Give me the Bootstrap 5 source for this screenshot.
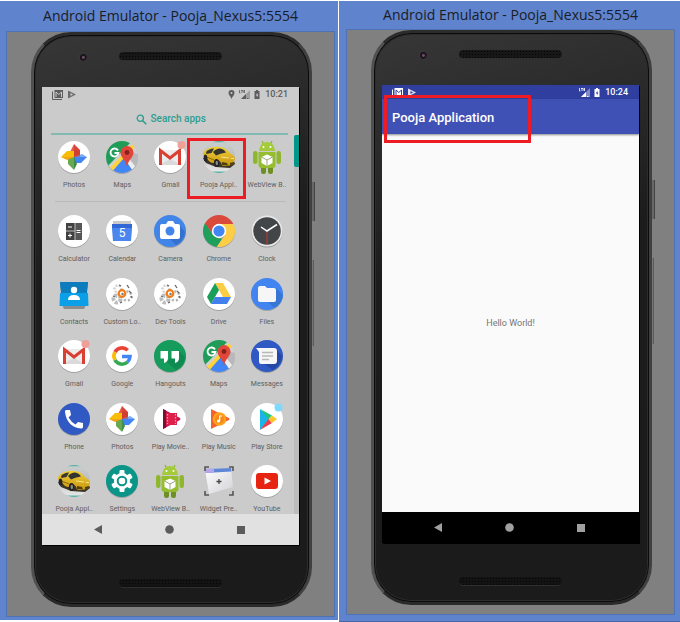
<!DOCTYPE html>
<html lang="en">
<head>
<meta charset="utf-8">
<meta name="viewport" content="width=device-width, initial-scale=1">
<title>Android Emulator - Pooja_Nexus5:5554</title>
<link href="https://cdn.jsdelivr.net/npm/bootstrap@5.3.0/dist/css/bootstrap.min.css" rel="stylesheet">
<style>
  body { font-family: Roboto, "Liberation Sans", sans-serif; background: #fff; }
  .desk { column-gap: 1px; padding-top: 1px; }
  .emu { background: #6083cd; min-width: 0; }
  .emu-a { flex: 1 1 338px; padding: 0 3px 3px 6px; margin-bottom: 2px; }
  .emu-b { flex: 1 1 341px; padding: 0 5px 6px 7px; border-bottom: 1px solid #4767a8; }
  .emu-title { font: 14px/26px "Open Sans", "Noto Sans", sans-serif; color: #191d25; margin: 0; padding: 1px 0; white-space: nowrap; text-align: center; }
  .emu-a .emu-title { padding: 2px 0; }
  .stage { background: #808080; border: 1px solid #4f72b5; padding: 0 22px 9px 24px; }

  .phone {
    position: relative; padding: 0 10px 0 8px;
    border: 3px solid #404040; border-top-color: #2c2c2c; border-bottom-color: #2a2a2a; border-left-color: #505050; border-radius: 40px;
    background: linear-gradient(165deg, #373737 0, #2d2d2e 15%, #1c1c1c 40%, #1b1b1b 100%);
    box-shadow: inset 0 0 0 1px #0b0b0b, inset 0 0 0 2px #2c2c2c;
  }
  .key { position: absolute; right: -6px; width: 3px; background: #696667; border-right: 1px solid #444; }
  .key-power { top: 147px; height: 39px; }
  .key-volume { top: 225px; height: 86px; right: -5px; width: 2px; border-color: #5c5c5c; background: #767676; }
  .bezel { display: grid; grid-template-columns: 1fr 103px 1fr; }
  .bezel-top { height: 52px; padding-top: 17px; }
  .bezel-bottom { height: 59px; padding-top: 34px; }
  .speaker { height: 9px; border-radius: 5px; background-color: #171717; background-image: radial-gradient(#050505 1px, transparent 1px); background-size: 3px 3px; background-clip: padding-box; border-bottom: 1px solid #2f2f2f; grid-column: 2; }
  .bezel-bottom .speaker { background-color: #131313; }
  .lens { width: 9px; height: 9px; margin-left: 3px; border-radius: 50%; background: radial-gradient(circle at 60% 60%, #6b4a62 0 1px, #17151b 2px 3px, #393539 4px); justify-self: center; }

  .screen { position: relative; box-shadow: 1px 1px 0 #000; min-height: 0; }
  .drawer { background: #cbcbcb; color: #5c5c5c; }
  .status { height: 14px; padding: 0 11px 0 10px; font-size: 9px; line-height: 14px; font-weight: 500; }
  .status svg { flex: none; }
  .status .clock { margin-left: 5px; }
  .find { height: 34px; margin: 0 11px 0 9px; padding: 4px 0 0 3px; border-bottom: 2px solid #83b9b1; color: #2f9d8e; gap: 4px; }
  .find input { width: 56px; padding: 0; border: 0; outline: 0; background: none; font-size: 10px; line-height: 14px; font-weight: 500; color: inherit; }
  .find input::placeholder { color: #2f9d8e; opacity: 1; }
  .apps { padding: 6px 3px 0 8px; min-width: 0; }
  .app-grid { display: grid; grid-template-columns: repeat(5, minmax(0, 1fr)); row-gap: 13px; align-content: space-between; }
  .split { height: 1px; margin: 11px 5px 13px 5px; background: #b9b9b9; }
  .app { position: relative; color: #5e5e5e; text-decoration: none; display: flex; flex-direction: column; align-items: center; gap: 8px; font-size: 7px; line-height: 9px; white-space: nowrap; }
  .app svg { width: 34px; height: 34px; margin: -1px; overflow: visible; }
  .rail { width: 5px; background: #bdbdbd; }
  .thumb { height: 32px; background: #009688; border-radius: 2px 0 0 2px; }
  .outline-box { position: absolute; border: 3px solid #ed1c24; pointer-events: none; z-index: 2; }
  .outline-app { top: -3px; bottom: -9px; left: -8px; right: -3px; }
  .outline-bar { top: 10px; left: 2px; width: 147px; height: 48px; }

  .keys { height: 31px; background: #e1e1e1; color: #5c5c5c; padding: 0 22px 0 20px; }
  .keys button { flex: 1 1 0; border: 0; padding: 0; background: none; color: inherit; line-height: 1; display: flex; justify-content: center; }
  .keys-dark { background: #000; color: #a0a0a0; }
  .hello { background: #fafafa; color: #757575; font-size: 9px; padding-top: 2px; }
  .status-blue { background: #303f9f; color: #fff; }
  .toolbar { height: 35px; background: #3f51b5; color: #fff; padding: 3px 10px 0; box-shadow: 0 1px 2px rgba(0,0,0,.45); z-index: 1; }
  .toolbar h2 { font-size: 13px; line-height: 16px; font-weight: 500; margin: 0; }
</style>
<script src="https://cdn.jsdelivr.net/npm/bootstrap@5.3.0/dist/js/bootstrap.bundle.min.js"></script>
</head>
<body>

<svg width="0" height="0" class="position-absolute" aria-hidden="true">
  <defs>
    <linearGradient id="gray" x2="1" y2="1"><stop stop-color="#fff"/><stop offset="1" stop-color="#d2d2d8"/></linearGradient>
    <linearGradient id="gold" x2="0" y2="1"><stop stop-color="#f0cf3a"/><stop offset="1" stop-color="#c9970f"/></linearGradient>
    <linearGradient id="haze" x2="0" y2="1"><stop stop-color="#c9cfce"/><stop offset=".5" stop-color="#bcbdbe"/><stop offset=".75" stop-color="#d8d8d8"/><stop offset="1" stop-color="#e8e8e8"/></linearGradient>
    <clipPath id="disc"><circle cx="16" cy="16" r="16"/></clipPath>
    <g id="plate"><circle cx="16" cy="17" r="16" fill="#000" opacity=".2"/><circle cx="16" cy="16" r="16" fill="#fff"/></g>
    <symbol id="photos" viewBox="-1 -1 34 34"><use href="#plate"/>
      <path d="M16 3l6 6v7h-6z" fill="#db4437"/><path d="M16 3v13l-4-5z" fill="#e8594b"/>
      <path d="M29 16l-6 6h-7v-6z" fill="#4285f4"/><path d="M16 16h13l-5-3z" fill="#7baaf7"/>
      <path d="M16 29l-6-6v-7h6z" fill="#6aa84f"/><path d="M16 16v13l3-6z" fill="#3c8f44"/>
      <path d="M3 16l6-6h7v6z" fill="#fbbc05"/><path d="M16 16H3l6 3z" fill="#f4a317"/>
      <path d="M16 9l6 0v7h-6z" fill="#c53929" opacity=".5"/></symbol>
    <symbol id="maps" viewBox="-1 -1 34 34"><circle cx="16" cy="17" r="16" opacity=".2"/>
      <g clip-path="url(#disc)"><path d="M0 0h32v32H0z" fill="#d0d0d2"/><path d="M0 0h26L0 27z" fill="#1f9d58"/>
      <path d="M27 2l3 3L8 31H0z" fill="#ffd43a"/><path d="M18 17l12 16H4z" fill="#4285f4"/><path d="M24 11l8 2v17L20 18z" fill="#b9b9bc"/><path d="M18 17l3-2 11 14-3 4z" fill="#eee"/></g>
      <path d="M12 9.500a4 4 0 1 0 .5 2.500h-4" fill="none" stroke="#fff" stroke-width="1.800"/>
      <path d="M21 5a6.500 6.500 0 0 1 6.500 6.500c0 5-5 7-6.500 14-1.500-7-6.500-9-6.500-14A6.500 6.500 0 0 1 21 5z" fill="#e0473a"/><circle cx="21" cy="11.500" r="2.400" fill="#82231c"/></symbol>
    <symbol id="gmail" viewBox="-1 -1 34 34"><use href="#plate"/>
      <path d="M5 9h22v15H5z" fill="#ececec"/><path d="M16 18l11 6H5z" fill="#dadada"/><path d="M6.500 24V9.500L16 17l9.500-7.500V24" fill="none" stroke="#d93f33" stroke-width="3"/>
      <circle cx="27.500" cy="4" r="4" fill="#ee9f98"/></symbol>
    <symbol id="car" viewBox="-1 -1 34 34"><g clip-path="url(#disc)"><path d="M0 0h32v32H0z" fill="url(#haze)"/><path d="M8 30.500h16V32H8z" fill="#55b2a5"/><path d="M8 0h16v1.300H8z" fill="#55b2a5"/></g>
      <path d="M0 17l3 5 10 4 14 1 5-4-2-6z" fill="#3a3526"/>
      <path d="M0 12q2-4 8-5.500 9-2 15 1.500l5 5q4 2 4 5l-2 5q-5 3-11 1.500-1-5-5-5.500-2 0-3 3-5 0-7-5Q-1 16 0 12z" fill="url(#gold)"/>
      <path d="M3 11q3-3.500 8-3.500L8.500 12l-5 1z" fill="#38382f"/><path d="M10 11q3-3.500 7-3.500 4 .5 6 4-6 1-10 3z" fill="#33342f"/>
      <path d="M1 15l10 4" stroke="#8a6a0c" stroke-width="1"/>
      <ellipse cx="2.500" cy="17" rx="1.800" ry="3.500" fill="#252525"/><ellipse cx="13.500" cy="22" rx="2.600" ry="4" fill="#222"/><ellipse cx="13.800" cy="22" rx="1.200" ry="2.300" fill="#8b8b85"/>
      <path d="M19 21l5 1 1 2.500-6-.5zM27 22l4-1-1 2.500-3 .500z" fill="#4e400f"/><path d="M18 16l8 1M28 17.500l3 0" stroke="#fff0a0" stroke-width=".800"/></symbol>
    <symbol id="robot" viewBox="-1 -1 34 34"><path d="M11 0l2 4M21 0l-2 4" stroke="#8db52c" stroke-width="1.200"/>
      <path d="M8 10q1-9 8-9t8 9z" fill="#a4cb39"/><circle cx="12.500" cy="6" r="1" fill="#fff"/><circle cx="19.500" cy="6" r="1" fill="#fff"/>
      <rect x="2" y="10" width="4.500" height="13" rx="2.200" fill="#8fb72e"/><rect x="25.500" y="10" width="4.500" height="13" rx="2.200" fill="#8fb72e"/>
      <rect x="10" y="22" width="5" height="11" rx="2.200" fill="#6e8f22"/><rect x="17" y="22" width="5" height="11" rx="2.200" fill="#6e8f22"/>
      <path d="M7.500 11h17v13q0 3-3 3h-11q-3 0-3-3z" fill="#94bd2f"/>
      <path d="M16 13.500l5.500 2.500v6L16 25l-5.500-3v-6z" fill="#fff"/><path d="M10.500 16l5.500 3 5.500-3M16 19v6" fill="none" stroke="#9aa77c"/></symbol>
    <symbol id="calc" viewBox="-1 -1 34 34"><use href="#plate"/><rect x="8" y="8" width="16" height="17" fill="#424242"/><path d="M17 8h7v17h-7z" fill="#565656"/><path d="M8 16h9M17 8v17" stroke="#ddd" stroke-width=".800"/><path d="M10 12h4M10 20.500h4M12 18.500v4M18.500 15.500h4M18.500 17.500h4" stroke="#fff"/></symbol>
    <symbol id="calendar" viewBox="-1 -1 34 34"><use href="#plate"/><path d="M7 6h18v4H7z" fill="#c9c9c9"/><path d="M6 9h20v5l-1 12H7L6 14z" fill="#4a86ee"/><path d="M6 9h20v4H6z" fill="#3367d6"/><text x="16" y="22" font-family="Roboto, sans-serif" font-size="12" text-anchor="middle" fill="#fff">5</text></symbol>
    <symbol id="camera" viewBox="-1 -1 34 34"><circle cx="16" cy="17" r="16" opacity=".2"/><circle cx="16" cy="16" r="16" fill="#4285e8"/><path d="M25 10l6 7q-1 9-9 13l-6-6z" fill="#3471cf"/><path d="M8 9h4l2-3h5l2 3h3q2 0 2 2v11q0 2-2 2H8q-2 0-2-2V11q0-2 2-2z" fill="#fff"/><circle cx="16" cy="16" r="4.500" fill="#4285e8"/></symbol>
    <symbol id="chrome" viewBox="-1 -1 34 34"><circle cx="16" cy="17" r="16" opacity=".2"/><g clip-path="url(#disc)"><path d="M0 0h32v9H16l-6 10L0 7z" fill="#d94a3d"/><path d="M0 5l10 15 9 4-6 9H0z" fill="#1e9f5b"/><path d="M16 9h18v24H13l9-13z" fill="#fdce45"/></g><circle cx="16" cy="16" r="7.200" fill="#fff"/><circle cx="16" cy="16" r="5.600" fill="#4285f4"/></symbol>
    <symbol id="clock" viewBox="-1 -1 34 34"><circle cx="16" cy="17" r="15.500" opacity=".25"/><circle cx="16" cy="16" r="15.500" fill="#e8e8e8"/><circle cx="16" cy="16" r="13.800" fill="#434649"/><path d="M16 16v13" stroke="#b3392f" stroke-width="1.200"/><path d="M10 12l6 4 10-6.500" fill="none" stroke="#fff" stroke-width="1.500"/></symbol>
    <symbol id="contacts" viewBox="-1 -1 34 34"><path d="M4 27h24l-2 4H6z" opacity=".3"/><path d="M2 4h28l-1 8H3z" fill="#0b72b0"/><path d="M2 15h28l.500 13h-29z" fill="#0b9fe8"/><path d="M2 4l1 11h26l1-11z" fill="#0d7cbd"/><circle cx="16" cy="12" r="3.200" fill="#fff"/><path d="M10 22q0-5 6-5t6 5z" fill="#fff"/></symbol>
    <symbol id="gears" viewBox="-1 -1 34 34"><use href="#plate"/><circle cx="12" cy="11" r="3.500" fill="none" stroke="#d2d2d2" stroke-width="2.500" stroke-dasharray="2 1.400"/><circle cx="11" cy="21" r="3.500" fill="none" stroke="#bdbdbd" stroke-width="4" stroke-dasharray="3 1.500"/><circle cx="21" cy="18" r="4.500" fill="none" stroke="#b3b3b3" stroke-width="2.500" stroke-dasharray="2 2"/><path d="M13 7l2 1M21 7l2 3M23 13l2 2M7 18l2 1M14 25l2-1M25 18l1 2" stroke="#666" stroke-width="1.300"/><circle cx="16" cy="15.500" r="3.300" fill="#fff" stroke="#f37b14" stroke-width="2.200"/><circle cx="16.500" cy="16" r="1.200" fill="#777"/></symbol>
    <symbol id="drive" viewBox="-1 -1 34 34"><use href="#plate"/><path d="M12 5h8l8 14h-8z" fill="#fccc44"/><path d="M12 5l4 7L8 26l-4-7z" fill="#1a9f58"/><path d="M12 19h16l-4 7H8z" fill="#4380ee"/></symbol>
    <symbol id="files" viewBox="-1 -1 34 34"><circle cx="16" cy="17" r="16" opacity=".2"/><circle cx="16" cy="16" r="16" fill="#4285f0"/><path d="M25 10l7 7q-1 9-9 13l-6-6z" fill="#3876d6"/><path d="M9 8h5l2 2h7q2 0 2 2v10q0 2-2 2H9q-2 0-2-2V10q0-2 2-2z" fill="#f6f6f6"/></symbol>
    <symbol id="google" viewBox="-1 -1 34 34"><use href="#plate"/><g fill="none" stroke-width="3.600"><path d="M21.700 10.300A8 8 0 0 0 9 12" stroke="#e94335"/><path d="M9 12a8 8 0 0 0 0 8" stroke="#fbbc05"/><path d="M9 20a8 8 0 0 0 12.500 2" stroke="#34a853"/><path d="M21.500 22a8 8 0 0 0 2.500-5.500h-8" stroke="#4285f4"/></g></symbol>
    <symbol id="hangouts" viewBox="-1 -1 34 34"><circle cx="16" cy="17" r="16" opacity=".2"/><circle cx="16" cy="16" r="16" fill="#159b5b"/><path d="M24 10l7 7q-1 9-9 13l-9-8z" fill="#0f8a50"/><path d="M6.500 11H14v7q0 4-4 5v-4.500H6.500zM17.500 11H25v7q0 4-4 5v-4.500h-3.500z" fill="#fff"/></symbol>
    <symbol id="messages" viewBox="-1 -1 34 34"><circle cx="16" cy="17" r="16" opacity=".2"/><circle cx="16" cy="16" r="16" fill="#3159c4"/><path d="M25 9l6 7q-1 9-9 14l-9-6z" fill="#2548a6"/><path d="M5 8h18q3 0 3 3v10q0 3-3 3H10q-2 0-2-3v-9z" fill="#f6f6f6"/><path d="M11 12.500h11M11 16h11M11 19.500h7" stroke="#b8b8b8" stroke-width="1.300"/></symbol>
    <symbol id="dialer" viewBox="-1 -1 34 34"><circle cx="16" cy="17" r="16" opacity=".2"/><circle cx="16" cy="16" r="16" fill="#3159c4"/><path d="M8 7h4l1 5-2.500 2.500q3 5 7 7L20 19l5 1v4q0 1.500-2 1.500Q9 24 7 9q0-2 1-2z" fill="#fff"/></symbol>
    <symbol id="movies" viewBox="-1 -1 34 34"><use href="#plate"/><path d="M9 6l17 9q1 1 0 2L9 26z" fill="#c2185b"/><path d="M9 6l3 1.600v17L9 26z" fill="#7b1034"/><path d="M12 10h11v12H12z" fill="#dd1f4a"/><path d="M13.500 11v10M21.500 11v10" stroke="#ff9db3" stroke-width="1.200" stroke-dasharray="1.500 1.500"/></symbol>
    <symbol id="music" viewBox="-1 -1 34 34"><use href="#plate"/><path d="M8 6l18 9q1 1 0 2L8 26z" fill="#f1632c"/><circle cx="16.500" cy="16" r="6.800" fill="#fda21b"/><circle cx="16.500" cy="16" r="4.500" fill="#f58a1b"/><circle cx="15.500" cy="18" r="1.600" fill="#fff"/><path d="M16.700 18v-5h2.300" fill="none" stroke="#fff" stroke-width="1.200"/></symbol>
    <symbol id="store" viewBox="-1 -1 34 34"><use href="#plate"/><path d="M9 6l10 10L9 27z" fill="#1bb4e8"/><path d="M9 6l12 6.500-3.500 3.500z" fill="#22c37a"/><path d="M9 27l12-7-3.500-4z" fill="#ef3e4a"/><path d="M21 12.500l5 3.500-5 4-3.500-4z" fill="#fdc62e"/><circle cx="27.500" cy="4.500" r="4" fill="#7fd9ff"/></symbol>
    <symbol id="gear" viewBox="-1 -1 34 34"><circle cx="16" cy="17" r="16" opacity=".2"/><circle cx="16" cy="16" r="16" fill="#0b9488"/><g fill="#fff"><rect x="13.500" y="5" width="5" height="22" rx="1"/><rect x="13.500" y="5" width="5" height="22" rx="1" transform="rotate(60 16 16)"/><rect x="13.500" y="5" width="5" height="22" rx="1" transform="rotate(120 16 16)"/><circle cx="16" cy="16" r="8"/></g><circle cx="16" cy="16" r="4.300" fill="none" stroke="#0b9488" stroke-width="2"/></symbol>
    <symbol id="widget" viewBox="-1 -1 34 34"><path d="M2 4l26-1 2 19-24 7z" fill="url(#gray)"/><path d="M2 4l26-1 .400 3.500L2.600 8z" fill="#5f86d6"/><path d="M2 4l9-.400V7.500L2.600 8z" fill="#b3a6ec"/><path d="M2 6V2h4M26 2h4v4M2 26v4h4M26 30h4v-4" fill="none" stroke="#555" stroke-width="1.600"/><path d="M13.500 16.500h5M16 14v5" stroke="#444" stroke-width="1.300"/></symbol>
    <symbol id="tube" viewBox="-1 -1 34 34"><use href="#plate"/><rect x="5" y="8" width="22" height="16" rx="3" fill="#e62410"/><path d="M13.500 12.500l6.500 3.500-6.500 3.500z" fill="#fff"/></symbol>

    <symbol id="s-mail" viewBox="0 0 11 11"><path d="M2.500 1H11v8H2.500z" fill="currentColor"/><path d="M.500 2.500v8H10" fill="none" stroke="currentColor"/><path d="M4 8V3l2.800 2.500L9.500 3v5" fill="none" stroke="var(--cut)"/></symbol>
    <symbol id="s-play" viewBox="0 0 9 11"><path d="M1 1.500l8 4-8 4z" fill="currentColor" opacity=".85"/><path d="M3.500 4v3L6 5.500z" fill="var(--cut)"/></symbol>
    <symbol id="s-pin" viewBox="0 0 7 11"><path d="M3.500 1a3 3 0 0 1 3 3c0 2-2 3-3 6-1-3-3-4-3-6a3 3 0 0 1 3-3z" fill="currentColor"/><circle cx="3.500" cy="4" r="1" fill="var(--cut)"/></symbol>
    <symbol id="s-signal" viewBox="0 0 11 11"><path d="M.500 1v3h1M2 1.500h2M3 1v3M6 1.500H4.800v2H6M4.800 2.500H6" fill="none" stroke="currentColor" stroke-width=".800"/><path d="M11 1v9H2z" fill="currentColor" opacity=".4"/><path d="M7 5v5H2z" fill="currentColor"/><path d="M8 9.500h1.500" stroke="currentColor"/></symbol>
    <symbol id="s-battery" viewBox="0 0 6 11"><path d="M2 1h2v1h1.500v8h-5V2H2z" fill="currentColor"/><path d="M3.500 3.500L1.800 6.500h1.100v2L4.400 5.500H3.300z" fill="var(--cut)"/></symbol>
  </defs>
</svg>

<main class="desk d-flex min-vh-100">
  <section class="emu emu-a d-flex flex-column" aria-label="Emulator with app drawer">
    <h1 class="emu-title">Android Emulator - Pooja_Nexus5:5554</h1>
    <div class="stage d-flex flex-column flex-fill">
      <div class="phone d-flex flex-column flex-fill">
        <span class="key key-power"></span><span class="key key-volume"></span>
        <div class="bezel bezel-top"><span class="lens"></span><span class="speaker"></span></div>
        <div class="screen drawer d-flex flex-column flex-fill" style="--cut:#cbcbcb">
          <div class="status d-flex align-items-center">
            <svg width="11" height="11"><use href="#s-mail"/></svg>
            <svg class="ms-1" width="9" height="11"><use href="#s-play"/></svg>
            <svg class="ms-auto" width="7" height="11"><use href="#s-pin"/></svg>
            <svg class="ms-1" width="11" height="11"><use href="#s-signal"/></svg>
            <svg class="ms-1" width="6" height="11"><use href="#s-battery"/></svg>
            <span class="clock">10:21</span>
          </div>
          <div class="find d-flex align-items-center justify-content-center">
            <label for="q" class="d-flex" aria-label="Search apps"><svg width="11" height="11" viewBox="0 0 11 11" fill="none" stroke="currentColor"><circle cx="4.300" cy="4.300" r="3.100" stroke-width="1.300"/><path d="M6.700 6.700l3.600 3.600" stroke-width="1.600"/></svg></label>
            <input id="q" type="text" placeholder="Search apps">
          </div>
          <div class="d-flex flex-fill">
            <div class="apps d-flex flex-column flex-fill">
              <nav class="app-grid" aria-label="Suggested apps">
                <a class="app" href="#"><svg><use href="#photos"/></svg>Photos</a>
                <a class="app" href="#"><svg><use href="#maps"/></svg>Maps</a>
                <a class="app" href="#"><svg><use href="#gmail"/></svg>Gmail</a>
                <a class="app" href="#"><svg><use href="#car"/></svg>Pooja Appl..<span class="outline-box outline-app"></span></a>
                <a class="app" href="#"><svg><use href="#robot"/></svg>WebView B..</a>
              </nav>
              <div class="split"></div>
              <nav class="app-grid flex-fill" aria-label="All apps">
                <a class="app" href="#"><svg><use href="#calc"/></svg>Calculator</a>
                <a class="app" href="#"><svg><use href="#calendar"/></svg>Calendar</a>
                <a class="app" href="#"><svg><use href="#camera"/></svg>Camera</a>
                <a class="app" href="#"><svg><use href="#chrome"/></svg>Chrome</a>
                <a class="app" href="#"><svg><use href="#clock"/></svg>Clock</a>
                <a class="app" href="#"><svg><use href="#contacts"/></svg>Contacts</a>
                <a class="app" href="#"><svg><use href="#gears"/></svg>Custom Lo..</a>
                <a class="app" href="#"><svg><use href="#gears"/></svg>Dev Tools</a>
                <a class="app" href="#"><svg><use href="#drive"/></svg>Drive</a>
                <a class="app" href="#"><svg><use href="#files"/></svg>Files</a>
                <a class="app" href="#"><svg><use href="#gmail"/></svg>Gmail</a>
                <a class="app" href="#"><svg><use href="#google"/></svg>Google</a>
                <a class="app" href="#"><svg><use href="#hangouts"/></svg>Hangouts</a>
                <a class="app" href="#"><svg><use href="#maps"/></svg>Maps</a>
                <a class="app" href="#"><svg><use href="#messages"/></svg>Messages</a>
                <a class="app" href="#"><svg><use href="#dialer"/></svg>Phone</a>
                <a class="app" href="#"><svg><use href="#photos"/></svg>Photos</a>
                <a class="app" href="#"><svg><use href="#movies"/></svg>Play Movie..</a>
                <a class="app" href="#"><svg><use href="#music"/></svg>Play Music</a>
                <a class="app" href="#"><svg><use href="#store"/></svg>Play Store</a>
                <a class="app" href="#"><svg><use href="#car"/></svg>Pooja Appl..</a>
                <a class="app" href="#"><svg><use href="#gear"/></svg>Settings</a>
                <a class="app" href="#"><svg><use href="#robot"/></svg>WebView B..</a>
                <a class="app" href="#"><svg><use href="#widget"/></svg>Widget Pre..</a>
                <a class="app" href="#"><svg><use href="#tube"/></svg>YouTube</a>
              </nav>
            </div>
            <div class="rail"><div class="thumb"></div></div>
          </div>
          <div class="keys d-flex align-items-center">
            <button type="button" aria-label="Back"><svg width="8" height="9"><path d="M8 0v9L0 4.500z" fill="currentColor"/></svg></button>
            <button type="button" aria-label="Home"><svg width="9" height="9"><circle cx="4.500" cy="4.500" r="4.300" fill="currentColor"/></svg></button>
            <button type="button" aria-label="Overview"><svg width="8" height="8"><path d="M0 0h8v8H0z" fill="currentColor"/></svg></button>
          </div>
        </div>
        <div class="bezel bezel-bottom"><span class="speaker"></span></div>
      </div>
    </div>
  </section>

  <section class="emu emu-b d-flex flex-column" aria-label="Emulator with Pooja Application">
    <h1 class="emu-title">Android Emulator - Pooja_Nexus5:5554</h1>
    <div class="stage d-flex flex-column flex-fill">
      <div class="phone d-flex flex-column flex-fill">
        <span class="key key-power"></span><span class="key key-volume"></span>
        <div class="bezel bezel-top"><span class="lens"></span><span class="speaker"></span></div>
        <div class="screen d-flex flex-column flex-fill" style="--cut:#303f9f">
          <div class="status status-blue d-flex align-items-center">
            <svg width="11" height="11"><use href="#s-mail"/></svg>
            <svg class="ms-1" width="9" height="11"><use href="#s-play"/></svg>
            <svg class="ms-auto" width="11" height="11"><use href="#s-signal"/></svg>
            <svg class="ms-1" width="6" height="11"><use href="#s-battery"/></svg>
            <span class="clock">10:24</span>
          </div>
          <div class="toolbar d-flex align-items-center"><h2>Pooja Application</h2></div>
          <div class="hello d-flex flex-fill align-items-center justify-content-center">Hello World!</div>
          <div class="keys keys-dark d-flex align-items-center">
            <button type="button" aria-label="Back"><svg width="8" height="9"><path d="M8 0v9L0 4.500z" fill="currentColor"/></svg></button>
            <button type="button" aria-label="Home"><svg width="9" height="9"><circle cx="4.500" cy="4.500" r="4.300" fill="currentColor"/></svg></button>
            <button type="button" aria-label="Overview"><svg width="8" height="8"><path d="M0 0h8v8H0z" fill="currentColor"/></svg></button>
          </div>
          <span class="outline-box outline-bar"></span>
        </div>
        <div class="bezel bezel-bottom"><span class="speaker"></span></div>
      </div>
    </div>
  </section>
</main>
</body>
</html>
